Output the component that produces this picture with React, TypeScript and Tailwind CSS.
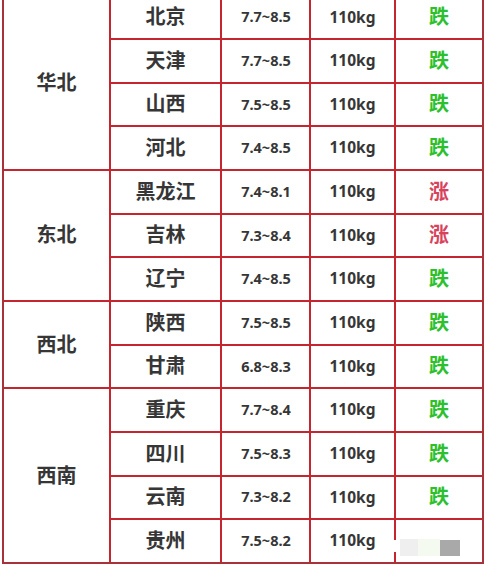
import React from "react";

type Row = { city: string; price: string; trend: "跌" | "涨" | "" };
const groups: { region: string; rows: Row[] }[] = [
  {
    region: "华北",
    rows: [
      { city: "北京", price: "7.7~8.5", trend: "跌" },
      { city: "天津", price: "7.7~8.5", trend: "跌" },
      { city: "山西", price: "7.5~8.5", trend: "跌" },
      { city: "河北", price: "7.4~8.5", trend: "跌" },
    ],
  },
  {
    region: "东北",
    rows: [
      { city: "黑龙江", price: "7.4~8.1", trend: "涨" },
      { city: "吉林", price: "7.3~8.4", trend: "涨" },
      { city: "辽宁", price: "7.4~8.5", trend: "跌" },
    ],
  },
  {
    region: "西北",
    rows: [
      { city: "陕西", price: "7.5~8.5", trend: "跌" },
      { city: "甘肃", price: "6.8~8.3", trend: "跌" },
    ],
  },
  {
    region: "西南",
    rows: [
      { city: "重庆", price: "7.7~8.4", trend: "跌" },
      { city: "四川", price: "7.5~8.3", trend: "跌" },
      { city: "云南", price: "7.3~8.2", trend: "跌" },
      { city: "贵州", price: "7.5~8.2", trend: "" },
    ],
  },
];

const spanClass: Record<number, string> = {
  2: "row-span-2",
  3: "row-span-3",
  4: "row-span-4",
};

const cell = "bg-white flex items-center justify-center";

export default function App() {
  const cells: React.ReactNode[] = [];
  groups.forEach((g, gi) => {
    g.rows.forEach((r, ri) => {
      if (ri === 0) {
        cells.push(
          <div
            key={`reg-${gi}`}
            className={`${cell} ${spanClass[g.rows.length]} text-[20px] font-bold text-[#363636]`}
          >
            {g.region}
          </div>
        );
      }
      cells.push(
        <div key={`c-${gi}-${ri}`} className={`${cell} text-[20px] font-bold text-[#363636]`}>
          {r.city}
        </div>
      );
      cells.push(
        <div key={`p-${gi}-${ri}`} className={`${cell} text-[14.5px] font-bold text-[#363636] pl-[1px]`}>
          {r.price}
        </div>
      );
      cells.push(
        <div key={`w-${gi}-${ri}`} className={`${cell} text-[15.5px] font-bold text-[#363636]`}>
          110kg
        </div>
      );
      if (r.trend) {
        cells.push(
          <div
            key={`t-${gi}-${ri}`}
            className={`${cell} text-[20px] font-bold ${
              r.trend === "跌" ? "text-[#2cc02c]" : "text-[#d8435c]"
            }`}
          >
            {r.trend}
          </div>
        );
      } else {
        cells.push(
          <div key={`t-${gi}-${ri}`} className="bg-white relative flex items-end pb-[6px] pl-[4px]">
            <div className="absolute left-[-3px] top-[20px] h-[12px] w-[4px] bg-white" />
            <div className="h-[17px] w-[18px] bg-[#efefef]" />
            <div className="h-[17px] w-[22px] bg-[#f4faf0]" />
            <div className="h-[16px] w-[20px] bg-[#a9a9a9]" />
          </div>
        );
      }
    });
  });

  return (
    <div
      className="w-[491px] h-[566px] overflow-hidden bg-white"
      style={{ fontFamily: '"Noto Sans", "Noto Sans CJK SC", sans-serif' }}
    >
      <div className="ml-[2px] mt-[-5.7px] w-[482px] border-2 border-[#a8323a] bg-[#c4252e]">
        <div className="grid grid-cols-[105px_109px_87px_83px_86px] auto-rows-[41.67px] gap-[2px]">
          {cells}
        </div>
      </div>
    </div>
  );
}
